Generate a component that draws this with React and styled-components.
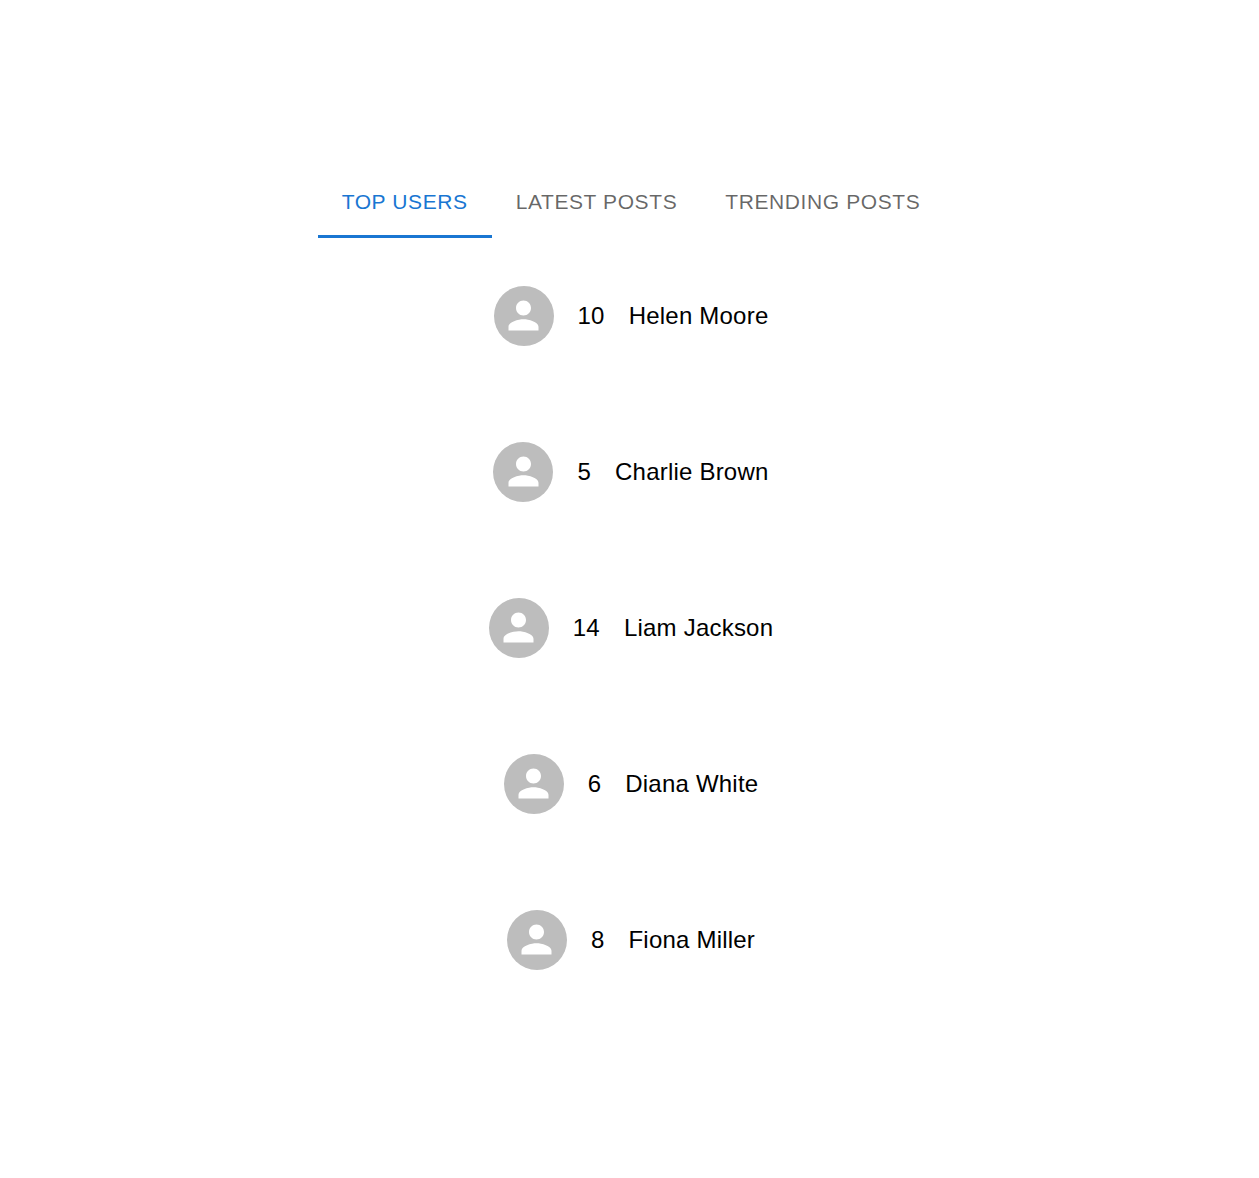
import React, { useState } from "react";
import styled, { createGlobalStyle } from "styled-components";

const GlobalStyle = createGlobalStyle`
  body {
    margin: 0;
    background: #fff;
    color: #000;
    font-family: "Liberation Sans", Arial, sans-serif;
  }
`;

const Page = styled.main`
  min-height: 1178px;
  box-sizing: border-box;
  padding: 166px 0 0 3px;
  display: flex;
  flex-direction: column;
  align-items: center;
`;

const TabBar = styled.div`
  display: flex;
  height: 72px;
`;

const Tab = styled.button`
  box-sizing: border-box;
  height: 72px;
  padding: 3px 24px 0;
  border: 0;
  border-bottom: 3px solid ${(p) => (p.$active ? "#1976d2" : "transparent")};
  background: transparent;
  color: ${(p) => (p.$active ? "#1976d2" : "rgba(0, 0, 0, 0.6)")};
  font: 400 21px/26.25px "Liberation Sans", Arial, sans-serif;
  letter-spacing: 0.6px;
  text-transform: uppercase;
  white-space: nowrap;
  cursor: pointer;
`;

const UserList = styled.ul`
  list-style: none;
  margin: 0;
  padding: 0;
`;

const UserRow = styled.li`
  display: flex;
  align-items: center;
  justify-content: center;
  gap: 24px;
  padding: 48px 0;
  height: 60px;
  font-size: 24px;
  letter-spacing: 0.215px;
  line-height: 36px;
`;

const Avatar = styled.span`
  box-sizing: border-box;
  display: flex;
  align-items: center;
  justify-content: center;
  width: 60px;
  height: 60px;
  padding-bottom: 2px;
  border-radius: 50%;
  background: #bdbdbd;
  color: #fff;
`;

const PersonIcon = styled.svg`
  width: 45px;
  height: 45px;
  fill: currentColor;
`;

const tabs = ["Top Users", "Latest Posts", "Trending Posts"];

const users = [
  { id: 10, name: "Helen Moore" },
  { id: 5, name: "Charlie Brown" },
  { id: 14, name: "Liam Jackson" },
  { id: 6, name: "Diana White" },
  { id: 8, name: "Fiona Miller" },
];

export default function App() {
  const [active, setActive] = useState(0);
  return (
    <>
      <GlobalStyle />
      <Page>
        <TabBar role="tablist">
          {tabs.map((label, i) => (
            <Tab
              key={label}
              role="tab"
              aria-selected={i === active}
              $active={i === active}
              onClick={() => setActive(i)}
            >
              {label}
            </Tab>
          ))}
        </TabBar>
        <UserList>
          {users.map((user) => (
            <UserRow key={user.id}>
              <Avatar>
                <PersonIcon viewBox="0 0 24 24" aria-hidden="true">
                  <path d="M12 12c2.21 0 4-1.79 4-4s-1.79-4-4-4-4 1.79-4 4 1.79 4 4 4m0 2c-2.67 0-8 1.34-8 4v2h16v-2c0-2.66-5.33-4-8-4" />
                </PersonIcon>
              </Avatar>
              <span>{user.id}</span>
              <span>{user.name}</span>
            </UserRow>
          ))}
        </UserList>
      </Page>
    </>
  );
}
